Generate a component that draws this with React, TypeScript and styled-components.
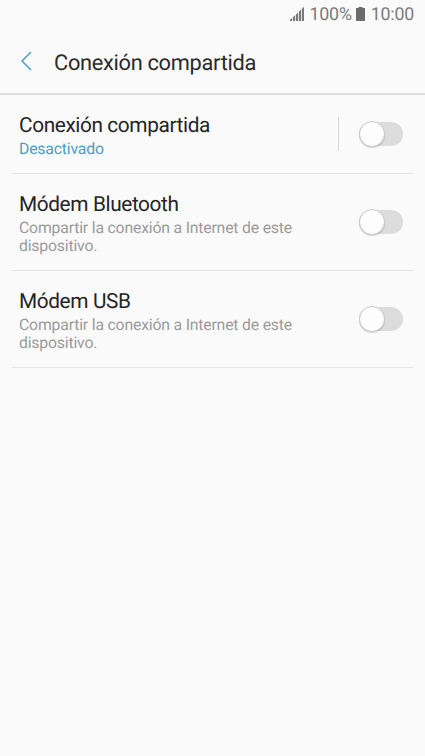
import React from "react";
import styled, { createGlobalStyle } from "styled-components";

const GlobalStyle = createGlobalStyle`
  * { box-sizing: border-box; }
  body {
    margin: 0;
    background: #fafafa;
    font-family: Roboto, sans-serif;
    text-rendering: geometricPrecision;
  }
`;

const Screen = styled.main`
  width: 425px;
  height: 756px;
  background: #fafafa;
  overflow: hidden;
`;

const StatusBar = styled.div`
  height: 30px;
  padding: 0 11px 1px 0;
  display: flex;
  align-items: center;
  justify-content: flex-end;
  color: #7a7a7a;
  font-size: 17.8px;
  letter-spacing: -0.2px;
`;

const SignalIcon = styled.svg`
  width: 15px;
  height: 14px;
  margin: 0 5px 1px 0;
`;

const BatteryIcon = styled.svg`
  width: 9px;
  height: 14px;
  margin: 0 6px 1px 4px;
`;

const Header = styled.header`
  height: 65px;
  border-bottom: 2px solid #dfdfdf;
  display: flex;
  align-items: center;
  padding-left: 20px;
`;

const BackIcon = styled.svg`
  width: 12px;
  height: 20px;
  margin: 0 22px 1px 0;
`;

const Title = styled.h1`
  margin: 0;
  padding-top: 3px;
  font-size: 21.8px;
  font-weight: 400;
  letter-spacing: -0.3px;
  color: #2b2b2b;
`;

const List = styled.div`
  padding: 0 12px;
`;

const Row = styled.section<{ $height: number }>`
  height: ${(p) => p.$height}px;
  padding: 0 10px 0 7px;
  display: flex;
  align-items: center;
  border-bottom: 1px solid #e6e6e6;
`;

const Labels = styled.div`
  flex: 1;
  padding-top: 3px;
`;

const Name = styled.div`
  font-size: 20.8px;
  line-height: 24px;
  letter-spacing: -0.38px;
  margin-bottom: 2px;
  color: #252525;
`;

const Note = styled.div<{ $accent?: boolean }>`
  max-width: 300px;
  font-size: 15.8px;
  line-height: 18px;
  letter-spacing: -0.19px;
  color: ${(p) => (p.$accent ? "#4a9fbf" : "#9b9b9b")};
`;

const Divider = styled.div`
  width: 1px;
  height: 34px;
  margin-right: 20px;
  background: #d8d8d8;
`;

const Track = styled.div`
  width: 44px;
  height: 24px;
  display: flex;
  align-items: center;
  border-radius: 12px;
  background: #dcdcdc;
`;

const Thumb = styled.div`
  width: 26px;
  height: 26px;
  flex: none;
  border-radius: 50%;
  background: #fdfdfd;
  border: 1px solid #c9c9c9;
  box-shadow: 0 1px 1px rgba(0, 0, 0, 0.15);
`;

function Switch() {
  return <Track role="switch" aria-checked={false}><Thumb /></Track>;
}

export default function App() {
  return (
    <Screen>
      <GlobalStyle />
      <StatusBar>
        <SignalIcon viewBox="0 0 15 14" fill="#7a7a7a">
          <path d="M0 14v-1.2L2 11v3zM2.9 14v-3.7l2.2-2V14zM5.9 14V7.5l2.2-2V14zM8.9 14V4.6l2.2-2V14zM11.9 14V1.8l2.1-2v14.2z" />
        </SignalIcon>
        <span>100%</span>
        <BatteryIcon viewBox="0 0 9 14" fill="#6c6c6c"><path d="M2.5 0h4v1H9v13H0V1h2.5z" /></BatteryIcon>
        <span>10:00</span>
      </StatusBar>
      <Header>
        <BackIcon viewBox="0 0 12 20" fill="none" stroke="#4a9fc4" strokeWidth="1.5"><path d="M11 1L2 10l9 9" /></BackIcon>
        <Title>Conexión compartida</Title>
      </Header>
      <List>
        <Row $height={79}>
          <Labels><Name>Conexión compartida</Name><Note $accent>Desactivado</Note></Labels>
          <Divider />
          <Switch />
        </Row>
        <Row $height={97}>
          <Labels><Name>Módem Bluetooth</Name><Note>Compartir la conexión a Internet de este dispositivo.</Note></Labels>
          <Switch />
        </Row>
        <Row $height={97}>
          <Labels><Name>Módem USB</Name><Note>Compartir la conexión a Internet de este dispositivo.</Note></Labels>
          <Switch />
        </Row>
      </List>
    </Screen>
  );
}
